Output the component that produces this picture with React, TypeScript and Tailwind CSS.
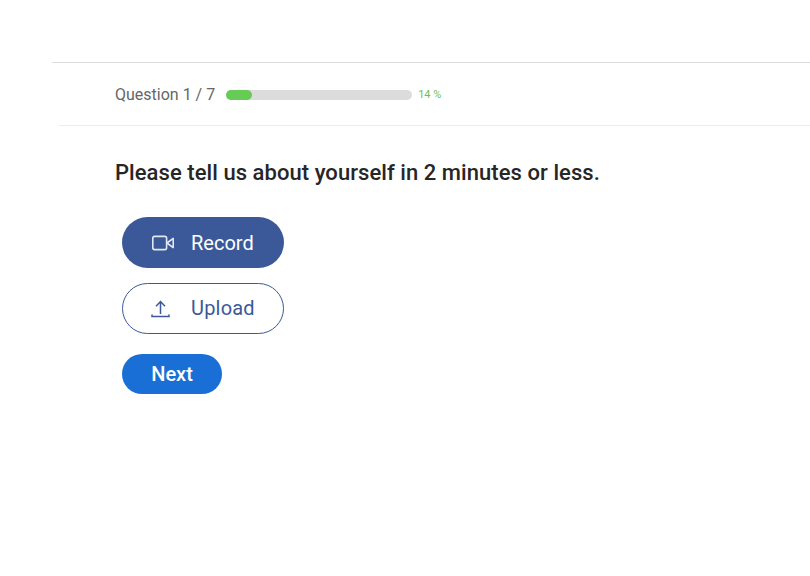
export default function App() {
  return (
    <div className="h-[576px] w-[810px] overflow-hidden bg-white font-['Roboto',sans-serif]">
      <div className="ml-[52px] mt-[62px] border-t border-[#dcdcdc]">
        <div className="flex h-[62px] items-center pl-[63px] pt-[2px]">
          <span className="text-[16px] text-[#666]">Question 1 / 7</span>
          <div className="ml-[11px] h-[10px] w-[186px] rounded-full bg-[#dcdcdc]">
            <div className="h-full w-[26px] rounded-full bg-[#66cc55]" />
          </div>
          <span className="ml-[6px] text-[11px] text-[#6cbf5e]">14 %</span>
        </div>
      </div>
      <div className="ml-[59px] border-t border-[#ececec] pl-[56px] pt-[32px]">
        <h1 className="text-[22px] leading-[30px] tracking-[0.06px] font-medium text-[#262626]">
          Please tell us about yourself in 2 minutes or less.
        </h1>
        <div className="ml-[7px] mt-[29px] flex flex-col items-start">
          <button className="flex h-[51px] w-[162px] items-center rounded-full bg-[#3b5998] pl-[30px] text-[20px] text-white">
            <svg width="23" height="16" viewBox="0 0 23 16" fill="none" stroke="#e3e7f0" strokeWidth="1.6">
              <rect x="0.8" y="1.4" width="13.8" height="13.2" rx="1.8" />
              <path d="M15 8 L21.2 3.4 V12.6 Z" strokeLinejoin="round" />
            </svg>
            <span className="ml-[16px]">Record</span>
          </button>
          <button className="mt-[15px] flex h-[51px] w-[162px] items-center rounded-full border border-[#3b5998] bg-white pb-[2px] pl-[28px] text-[20px] tracking-[0.2px] text-[#3b5998]">
            <svg width="19" height="18" viewBox="0 0 19 18" fill="none" stroke="#3b5998" strokeWidth="1.5" className="mt-[2px]">
              <path d="M9.5 14 V2 M5 6.2 L9.5 1.6 L14 6.2" />
              <path d="M1 14.6 V16.4 H18 V14.6" />
            </svg>
            <span className="ml-[21px]">Upload</span>
          </button>
          <button className="mt-[20px] h-[40px] w-[100px] rounded-full bg-[#1a6fd6] text-[20px] font-medium text-white">
            Next
          </button>
        </div>
      </div>
    </div>
  );
}
